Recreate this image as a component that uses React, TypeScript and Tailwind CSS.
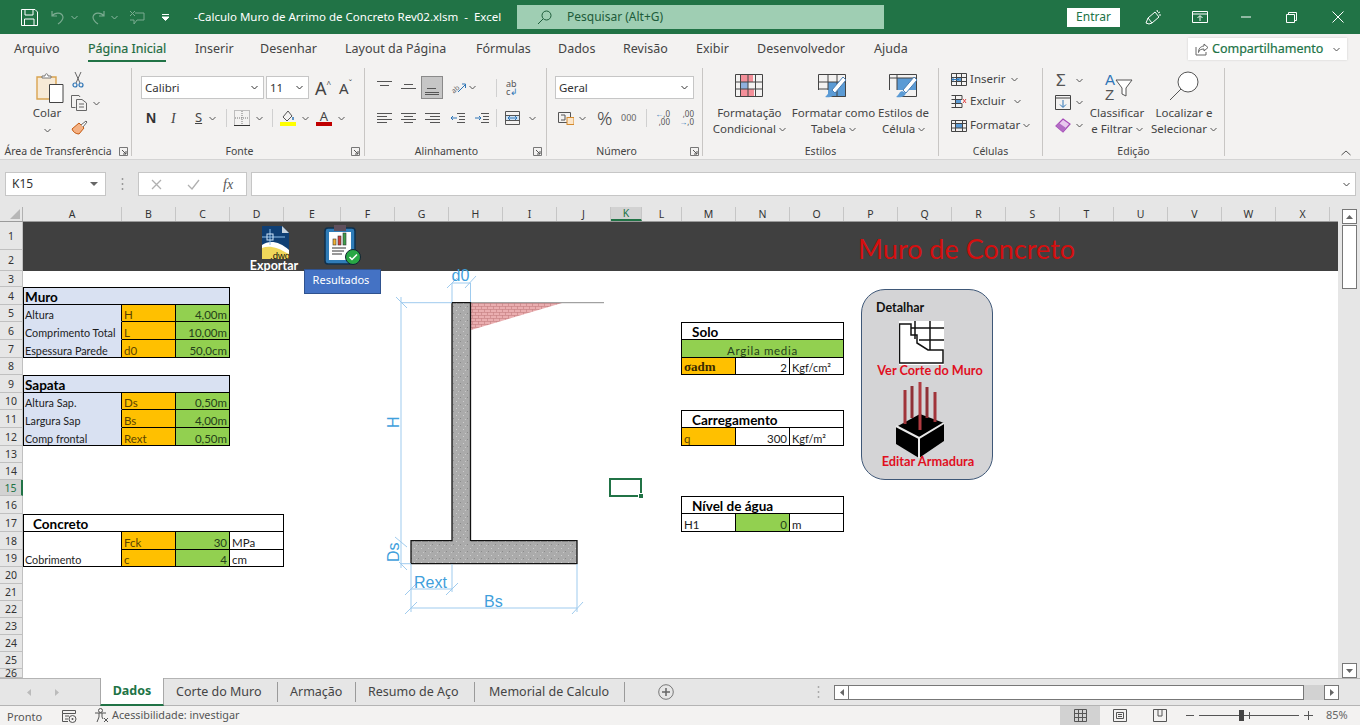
import React from "react";

type IcP = { w: number; h: number; className?: string; children?: React.ReactNode };
function Ic({ w, h, className, children }: IcP) {
  return (
    <svg width={w} height={h} viewBox={`0 0 ${w} ${h}`} fill="none" className={`shrink-0 ${className ?? ""}`}>
      {children}
    </svg>
  );
}
function Ch({ className, c = "#555" }: { className?: string; c?: string }) {
  return (
    <Ic w={7} h={5} className={className}>
      <path d="M.5 1 3.5 4 6.5 1" stroke={c} strokeWidth="1" />
    </Ic>
  );
}
function Lines({ w = 16, h = 14, l, className }: { w?: number; h?: number; l: number[][]; className?: string }) {
  return (
    <Ic w={w} h={h} className={className}>
      {l.map(([a, b, y], i) => (
        <path key={i} d={`M${a} ${y + 0.5}H${b}`} stroke="#555" />
      ))}
    </Ic>
  );
}
function Launcher() {
  return (
    <Ic w={9} h={9}>
      <path d="M.5 8.5V.5H8.5V8.5H.5" stroke="#777" />
      <path d="M3 3 7 7M7 4V7H4" stroke="#555" />
    </Ic>
  );
}
function Group({ className, label, launch, children }: { className: string; label: string; launch?: string; children: React.ReactNode }) {
  return (
    <div className={`flex h-[88px] mt-[2px] flex-col border-r border-[#c8c6c4] ${className}`}>
      <div className="h-[79px] shrink-0">{children}</div>
      <div className="flex h-[9px] items-center">
        <span className="flex-1 text-center text-[10.5px] leading-[11px] text-[#444] whitespace-nowrap">{label}</span>
        {launch && <span className={`flex ${launch} justify-center`}><Launcher /></span>}
      </div>
    </div>
  );
}
function Select({ className, text }: { className: string; text: string }) {
  return (
    <div className={`flex h-[23px] items-center justify-between border border-[#c6c6c6] bg-white pl-[3px] pr-[5px] ${className}`}>
      <span className="text-[11.5px] text-[#333]">{text}</span>
      <Ch c="#333" />
    </div>
  );
}
function BigBtn({ className, icon, a, b }: { className: string; icon: React.ReactNode; a: string; b: string }) {
  return (
    <div className={`flex flex-col items-center ${className}`}>
      <div className="h-[38px] pt-[6px]">{icon}</div>
      <span className="text-[11.5px] leading-[16px] text-[#444] whitespace-nowrap mt-[-1px]">{a}</span>
      <span className="flex items-center gap-[3px] text-[11.5px] leading-[16px] text-[#444] whitespace-nowrap">
        {b}
        <Ch />
      </span>
    </div>
  );
}

const Brush = () => (
  <g>
    <path d="M25 3 14 16l3 3L28 6z" fill="#fff" stroke="#4a7fb5" />
    <path d="M13 17c-3 1-3 4-6 6 4 1 9 0 10-4z" fill="#5b9bd5" />
  </g>
);

function TitleBar() {
  return (
    <div className="flex h-[34px] shrink-0 items-center bg-[#217346] text-white">
      <Ic w={17} h={17} className="ml-[21px]">
        <path d="M.5.5H14L16.5 3V16.5H.5Z M4 .5V6H12V.5 M3.5 16.5V10H13V16.5" stroke="#fff" />
      </Ic>
      <Ic w={15} h={15} className="ml-[12px] opacity-40">
        <path d="M2 1V6H7M2 6C5 2 12 2 13 7 13 10 11 12 8 14" stroke="#fff" strokeWidth="1.2" />
      </Ic>
      <Ch c="#8fb9a3" className="ml-[6px]" />
      <Ic w={15} h={15} className="ml-[13px] opacity-40">
        <path d="M13 1V6H8M13 6C10 2 3 2 2 7 2 10 4 12 7 14" stroke="#fff" strokeWidth="1.2" />
      </Ic>
      <Ch c="#8fb9a3" className="ml-[5px]" />
      <Ic w={16} h={15} className="ml-[11px] opacity-40">
        <path d="M6 3H15V10H8L5 14V10H1M1 1 6 6M6 1 1 6" stroke="#fff" />
      </Ic>
      <Ic w={7} h={7} className="ml-[17px]">
        <path d="M0 .5H7M0 3 3.5 6.5 7 3Z" stroke="#fff" fill="#fff" />
      </Ic>
      <span className="ml-[25px] w-[323px] overflow-hidden text-[11.5px] whitespace-nowrap">-Calculo Muro de Arrimo de Concreto Rev02.xlsm&nbsp; - &nbsp;Excel</span>
      <div className="flex h-[24px] w-[367px] items-center bg-[#9fceb3] text-[#1d5c3a]">
        <Ic w={15} h={15} className="ml-[20px]">
          <circle cx="9.5" cy="5.5" r="4.5" stroke="#1d5c3a" />
          <path d="M6 9 1 14" stroke="#1d5c3a" />
        </Ic>
        <span className="ml-[15px] text-[12px] whitespace-nowrap">Pesquisar (Alt+G)</span>
      </div>
      <div className="ml-[183px] flex h-[19px] w-[53px] items-center justify-center bg-white text-[12px] text-[#217346]">Entrar</div>
      <Ic w={17} h={17} className="ml-[25px]">
        <path d="M1 14 3 9 10 3 14 8 7 14 4 15ZM3 9l4 5M12 1l.5 2M15 3l-2 1M16 6h-2" stroke="#fff" />
      </Ic>
      <Ic w={16} h={12} className="ml-[30px]">
        <path d="M.5.5H15.5V11.5H.5ZM.5 3H15.5M8 10V5M5.5 7 8 4.5 10.5 7" stroke="#fff" />
      </Ic>
      <Ic w={10} h={2} className="ml-[33px]">
        <path d="M0 1H10" stroke="#fff" />
      </Ic>
      <Ic w={11} h={11} className="ml-[35px]">
        <path d="M.5 2.5H8.5V10.5H.5ZM2.5 2.5V.5H10.5V8.5H8.5" stroke="#fff" />
      </Ic>
      <Ic w={12} h={12} className="ml-[35px]">
        <path d="M.5.5 11.5 11.5M11.5.5.5 11.5" stroke="#fff" />
      </Ic>
    </div>
  );
}

const tabs: [string, string][] = [
  ["Arquivo", "w-[74px]"],
  ["Página Inicial", "w-[107px]"],
  ["Inserir", "w-[65px]"],
  ["Desenhar", "w-[85px]"],
  ["Layout da Página", "w-[131px]"],
  ["Fórmulas", "w-[82px]"],
  ["Dados", "w-[65px]"],
  ["Revisão", "w-[73px]"],
  ["Exibir", "w-[61px]"],
  ["Desenvolvedor", "w-[117px]"],
  ["Ajuda", "w-[60px]"],
];

function TabRow() {
  return (
    <div className="flex h-[32px] shrink-0 bg-[#f3f2f1] pl-[14px]">
      {tabs.map(([t, w]) => (
        <div key={t} className={`${w} flex`}>
          <span
            className={`h-[28px] pt-[6px] text-[12.5px] leading-[18px] whitespace-nowrap ${
              t === "Página Inicial" ? "border-b-[2px] border-[#217346] text-[#1f6b41] [-webkit-text-stroke:0.2px]" : "text-[#444]"
            }`}
          >
            {t}
          </span>
        </div>
      ))}
      <div className="ml-auto mr-[13px] mt-[4px] flex h-[22px] w-[159px] items-center bg-white pl-[7px] shadow-[0_0_2px_#ccc]">
        <Ic w={14} h={13}>
          <path d="M9 1l4 3.5L9 8V6C6 6 4 7 3.5 9.5 3.5 6 5 3.5 9 3ZM1 4V12H11V9" stroke="#666" />
        </Ic>
        <span className="ml-[3px] text-[12.5px] text-[#217346] whitespace-nowrap [-webkit-text-stroke:0.2px]">Compartilhamento</span>
        <Ch c="#555" className="ml-[10px]" />
      </div>
    </div>
  );
}

function Ribbon() {
  return (
    <div className="flex h-[94px] shrink-0 border-b border-[#d4d4d4] bg-[#f3f2f1]">
      <Group className="w-[132px]" label="Área de Transferência" launch="w-[15px]">
        <div className="flex">
          <div className="ml-[23px] flex w-[48px] flex-col items-center">
            <Ic w={28} h={30} className="ml-[6px] mt-[5px]">
              <path d="M1 4H20V26H1Z" fill="#f7ead6" stroke="#d9a450" strokeWidth="1.4" />
              <path d="M6 5V3H9C9 0 12 0 12 3H15V5Z" fill="#fff" stroke="#777" />
              <path d="M13.500 11.500H27V29.500H13.500Z" fill="#fff" stroke="#444" />
            </Ic>
            <span className="mt-[2px] text-[11.5px] leading-[16px] text-[#444]">Colar</span>
            <Ch className="mt-[7px]" />
          </div>
          <div className="flex flex-col">
            <Ic w={12} h={16} className="ml-[1px] mt-[4px]">
              <path d="M3 0 8 11M9 0 4 11" stroke="#666" />
              <circle cx="3" cy="13" r="2" stroke="#2e75b6" strokeWidth="1.2" />
              <circle cx="9" cy="13" r="2" stroke="#2e75b6" strokeWidth="1.2" />
            </Ic>
            <div className="mt-[7px] flex items-center">
              <Ic w={17} h={16}>
                <path d="M4.500 12.500H.5V.5H8L9 2M5.500 4.500H11L15.500 8V15.500H5.500ZM8 9H13M8 12H13" stroke="#666" />
              </Ic>
              <Ch className="ml-[5px]" />
            </div>
            <Ic w={17} h={15} className="mt-[9px]">
              <path d="M1 9 8 3 13 8 8 14C5 14 2 12 1 9Z" fill="#f4b183" stroke="#c55a11" />
              <path d="M10 5 15 1 16 2 12 7" fill="#fff" stroke="#666" />
            </Ic>
          </div>
        </div>
      </Group>

      <Group className="w-[233px]" label="Fonte" launch="w-[17px]">
        <div className="ml-[9px] mt-[8px] flex items-center">
          <Select className="w-[123px]" text="Calibri" />
          <Select className="ml-[2px] w-[43px]" text="11" />
          <span className="ml-[6px] text-[18px] leading-[20px] text-[#444]">A</span>
          <span className="mb-[8px] text-[8px] leading-[8px] text-[#444]">^</span>
          <span className="ml-[8px] text-[15px] leading-[20px] text-[#444]">A</span>
          <span className="mb-[8px] text-[8px] leading-[8px] text-[#444]">ˇ</span>
        </div>
        <div className="ml-[14px] mt-[7px] flex h-[24px] items-center">
          <span className="w-[24px] text-[14px] font-bold text-[#333] font-['Liberation_Sans',sans-serif]">N</span>
          <span className="w-[24px] pl-[1px] text-[14px] italic text-[#444] font-['Liberation_Serif',serif]">I</span>
          <span className="w-[14px] pl-[1px] text-[13px] text-[#444] underline">S</span>
          <Ch className="ml-[1px]" />
          <span className="ml-[10px] h-[18px] w-px bg-[#d0d0d0]" />
          <Ic w={16} h={16} className="ml-[7px]">
            <path d="M.5.5H15.500V15.500H.5Z" stroke="#888" strokeDasharray="1 1" />
            <path d="M8 1V15M1 8H15" stroke="#777" strokeDasharray="1 1" />
            <path d="M0 15.500H16" stroke="#333" />
          </Ic>
          <Ch className="ml-[6px]" />
          <span className="ml-[9px] h-[18px] w-px bg-[#d0d0d0]" />
          <Ic w={16} h={16} className="ml-[7px]">
            <path d="M3 7 8 1 12 6 7 11Z" stroke="#555" />
            <path d="M13 7V10" stroke="#2e75b6" strokeWidth="1.5" />
            <rect y="12" width="16" height="4" fill="#ffff00" />
          </Ic>
          <Ch className="ml-[6px]" />
          <div className="ml-[7px] flex w-[16px] flex-col items-center">
            <span className="text-[13px] leading-[12px] text-[#444]">A</span>
            <span className="h-[4px] w-[16px] bg-[#c00000]" />
          </div>
          <Ch className="ml-[6px]" />
        </div>
      </Group>

      <Group className="w-[182px]" label="Alinhamento" launch="w-[18px]">
        <div className="ml-[12px] mt-[8px] flex h-[23px] items-center">
          <Lines h={10} l={[[0, 15, 1], [3, 12, 5]]} className="mb-[5px]" />
          <Lines h={10} l={[[3, 12, 1], [0, 15, 5]]} className="ml-[8px]" />
          <div className="ml-[4px] flex h-[23px] w-[22px] items-center justify-center border border-[#8a8a8a] bg-[#c6c6c6]">
            <Lines w={14} h={10} l={[[2, 11, 3], [0, 14, 7], [0, 14, 9]]} className="mt-[4px]" />
          </div>
          <Ic w={16} h={14} className="ml-[7px] overflow-visible">
            <text x="1" y="11" fontSize="7" fill="#666" transform="rotate(-40 5 8)">ab</text>
            <path d="M8 11 15 4M12 3H15.500V7" stroke="#2e75b6" />
          </Ic>
          <Ch className="ml-[3px]" />
          <span className="ml-[20px] h-[18px] w-px bg-[#d0d0d0]" />
          <div className="ml-[9px] flex w-[16px] flex-col">
            <span className="h-[8px] text-[9px] leading-[8px] text-[#555]">ab</span>
            <span className="h-[8px] text-[9px] leading-[8px] text-[#555]">c<span className="text-[#2e75b6]">↲</span></span>
          </div>
        </div>
        <div className="ml-[12px] mt-[7px] flex h-[24px] items-center">
          <Lines h={12} l={[[0, 15, 1], [0, 10, 4], [0, 15, 7], [0, 10, 10]]} />
          <Lines h={12} l={[[0, 15, 1], [3, 12, 4], [0, 15, 7], [3, 12, 10]]} className="ml-[8px]" />
          <Lines h={12} l={[[0, 15, 1], [5, 15, 4], [0, 15, 7], [5, 15, 10]]} className="ml-[8px]" />
          <Ic w={16} h={12} className="ml-[9px]">
            <path d="M7 1.500H15M9 4.500H15M9 7.500H15M7 10.500H15" stroke="#555" />
            <path d="M1 6H7M3 4 1 6 3 8" stroke="#2e75b6" />
          </Ic>
          <Ic w={16} h={12} className="ml-[8px]">
            <path d="M7 1.500H15M9 4.500H15M9 7.500H15M7 10.500H15" stroke="#555" />
            <path d="M1 6H7M5 4 7 6 5 8" stroke="#2e75b6" />
          </Ic>
          <span className="ml-[6px] h-[18px] w-px bg-[#d0d0d0]" />
          <Ic w={15} h={14} className="ml-[8px]">
            <path d="M.5.5H14.500V13.500H.5ZM.5 4.500H14.500M.5 9.500H14.500" stroke="#555" />
            <rect x="1" y="5" width="13" height="4" fill="#cfe3f5" />
            <path d="M3 7H12M5 5 3 7 5 9M10 5 12 7 10 9" stroke="#2e75b6" />
          </Ic>
          <Ch className="ml-[9px]" />
        </div>
      </Group>

      <Group className="w-[156px]" label="Número" launch="w-[16px]">
        <Select className="ml-[8px] mt-[8px] w-[139px]" text="Geral" />
        <div className="ml-[11px] mt-[7px] flex h-[24px] items-center">
          <Ic w={16} h={14}>
            <path d="M.5 1.500H12.500V11.500H.5Z" stroke="#555" />
            <rect x="9" y="6.500" width="7" height="7" fill="#fbe5c8" stroke="#d48a2e" />
            <path d="M3 4H7V9H3" stroke="#555" />
          </Ic>
          <Ch className="ml-[5px]" />
          <span className="ml-[11px] w-[17px] text-[19px] font-light leading-[20px] text-[#444]">%</span>
          <span className="ml-[7px] w-[17px] text-[9px] text-[#666]">000</span>
          <span className="ml-[8px] h-[18px] w-px bg-[#d0d0d0]" />
          <div className="ml-[6px] flex w-[17px] flex-col text-[8px] leading-[8px] text-[#555]">
            <span className="h-[8px] text-right"><span className="text-[#2e75b6]">←</span>,0</span>
            <span className="h-[8px] text-right">,00</span>
          </div>
          <div className="ml-[7px] flex w-[17px] flex-col text-[8px] leading-[8px] text-[#555]">
            <span className="h-[8px] text-right">,00</span>
            <span className="h-[8px] text-right"><span className="text-[#2e75b6]">→</span>,0</span>
          </div>
        </div>
      </Group>

      <Group className="w-[236px]" label="Estilos">
        <div className="flex">
          <BigBtn
            className="ml-[9px] w-[76px]"
            a="Formatação"
            b="Condicional"
            icon={
              <Ic w={28} h={23}>
                <rect x="5" y="1" width="13" height="7" fill="#f4909a" />
                <rect x="5" y="8" width="8" height="7" fill="#8fb0dc" />
                <rect x="5" y="15" width="14" height="7" fill="#f4909a" />
                <path d="M.5.5H27.500V22.500H.5ZM.5 8H27.500M.5 15H27.500M5.500.5V22.500M13 .5V22.500M20.500.5V22.500" stroke="#444" />
              </Ic>
            }
          />
          <BigBtn
            className="ml-[5px] w-[84px]"
            a="Formatar como"
            b="Tabela"
            icon={
              <Ic w={30} h={26}>
                <rect x="10" y="8" width="18" height="15" fill="#5b9bd5" />
                <path d="M.5.5H27.500V22.500H10M.5.5V16M.5 8H27.500M.5 15H10M10 .5V16M19 .5V22" stroke="#444" />
                <Brush />
              </Ic>
            }
          />
          <BigBtn
            className="ml-[-6px] w-[70px]"
            a="Estilos de"
            b="Célula"
            icon={
              <Ic w={30} h={26}>
                <rect x="8" y="4" width="20" height="12" fill="#5b9bd5" />
                <path d="M.5.5H27.500V22.500H10M.5.5V16M.5 4H27.500M8 .5V16" stroke="#444" />
                <Brush />
              </Ic>
            }
          />
        </div>
      </Group>

      <Group className="w-[104px]" label="Células">
        <div className="ml-[12px] flex flex-col text-[11.5px] text-[#444]">
          <div className="mt-[2px] flex h-[18px] items-center">
            <Ic w={16} h={13}>
              <rect x="5" y="4" width="6" height="4" fill="#5b9bd5" />
              <path d="M.5.5H15.500V12.500H.5ZM.5 4.500H15.500M.5 8.500H15.500M5.500.5V12.500M10.500.5V12.500" stroke="#444" />
              <path d="M1 6.500H8M3 4.500 1 6.500 3 8.500" stroke="#2e75b6" />
            </Ic>
            <span className="ml-[3px] w-[41px]">Inserir</span>
            <Ch />
          </div>
          <div className="mt-[4px] flex h-[18px] items-center">
            <Ic w={16} h={13}>
              <rect x="4" y="4" width="6" height="5" fill="#5b9bd5" />
              <path d="M.5.5H11V4.500H.5M.5 8.500H11V12.500H.5M4.500.5V12.500" stroke="#444" />
              <path d="M12 4 15 8M15 4 12 8" stroke="#e04040" />
            </Ic>
            <span className="ml-[3px] w-[44px]">Excluir</span>
            <Ch />
          </div>
          <div className="mt-[6px] flex h-[18px] items-center">
            <Ic w={16} h={14}>
              <rect x="4" y="5" width="8" height="5" fill="#5b9bd5" />
              <path d="M.5 2.500H15.500V13.500H.5ZM.5 5.500H15.500M.5 10H15.500M4.500 2.500V13.500M11.500 2.500V13.500" stroke="#444" />
            </Ic>
            <span className="ml-[3px]">Formatar</span>
            <Ch className="ml-[3px]" />
          </div>
        </div>
      </Group>

      <Group className="w-[182px]" label="Edição">
        <div className="flex">
          <div className="ml-[12px] flex w-[33px] flex-col">
            <div className="mt-[3px] flex h-[18px] items-center">
              <span className="ml-[1px] w-[17px] text-[17px] leading-[16px] text-[#555]">Σ</span>
              <Ch className="ml-[3px]" />
            </div>
            <div className="mt-[5px] flex h-[16px] items-center">
              <Ic w={16} h={15}>
                <path d="M.5.5H15.500V14.500H.5ZM.5 3H15.500" stroke="#444" />
                <path d="M8 5V12M5 9.500 8 12.500 11 9.500" stroke="#2e75b6" />
              </Ic>
              <Ch className="ml-[5px]" />
            </div>
            <div className="mt-[7px] flex h-[16px] items-center">
              <Ic w={16} h={15}>
                <path d="M8 1 15 6 8 14 1 8Z" fill="#e8c9ee" stroke="#a64ab8" strokeWidth="1.2" />
                <path d="M4 5 11 10 8 14 1 8Z" fill="#b26cc4" />
              </Ic>
              <Ch className="ml-[5px]" />
            </div>
          </div>
          <div className="ml-[-1px] flex w-[60px] flex-col items-center">
            <div className="ml-[4px] h-[38px] pt-[4px]">
              <Ic w={30} h={30}>
                <text x="1" y="13" fontSize="15" fill="#2e75b6" fontFamily="Liberation Sans">A</text>
                <text x="1" y="28" fontSize="15" fill="#555" fontFamily="Liberation Sans">Z</text>
                <path d="M12 8H28L22 16V24L18 22V16Z" stroke="#555" fill="#fff" />
              </Ic>
            </div>
            <span className="text-[11.5px] leading-[16px] text-[#444] whitespace-nowrap -mt-[1px]">Classificar</span>
            <span className="flex items-center gap-[3px] text-[11.5px] leading-[16px] text-[#444] whitespace-nowrap">e Filtrar<Ch /></span>
          </div>
          <div className="ml-[3px] flex w-[68px] flex-col items-center">
            <div className="h-[38px] pt-[3px]">
              <Ic w={30} h={30}>
                <circle cx="19" cy="11" r="10" stroke="#555" fill="#fff" />
                <path d="M12 18 1 29" stroke="#555" />
              </Ic>
            </div>
            <span className="text-[11.5px] leading-[16px] text-[#444] whitespace-nowrap -mt-[1px]">Localizar e</span>
            <span className="flex items-center gap-[3px] text-[11.5px] leading-[16px] text-[#444] whitespace-nowrap">Selecionar<Ch /></span>
          </div>
        </div>
      </Group>

      <div className="ml-auto mr-[9px] mt-[84px]">
        <Ic w={10} h={6}>
          <path d="M.5 5 5 1 9.500 5" stroke="#555" />
        </Ic>
      </div>
    </div>
  );
}

function FormulaBar() {
  return (
    <div className="flex h-[47px] shrink-0 items-start bg-[#e6e6e6] pt-[12px]">
      <div className="ml-[5px] flex h-[24px] w-[101px] items-center justify-between border border-[#c6c6c6] bg-white pl-[6px] pr-[7px]">
        <span className="text-[12px] text-[#333]">K15</span>
        <Ic w={8} h={4}><path d="M0 0H8L4 4Z" fill="#666" /></Ic>
      </div>
      <Ic w={3} h={14} className="ml-[15px] mt-[5px]">
        <path d="M1.500 1V3M1.500 6V8M1.500 11V13" stroke="#999" strokeWidth="1.500" />
      </Ic>
      <div className="ml-[14px] flex h-[24px] w-[109px] items-center border border-[#c6c6c6] bg-white">
        <Ic w={11} h={11} className="ml-[12px]"><path d="M1 1 10 10M10 1 1 10" stroke="#b0b0b0" strokeWidth="1.300" /></Ic>
        <Ic w={13} h={11} className="ml-[25px]"><path d="M1 6 5 10 12 1" stroke="#b0b0b0" strokeWidth="1.300" /></Ic>
        <span className="ml-[23px] text-[14px] italic text-[#555] font-['Liberation_Serif',serif]">fx</span>
      </div>
      <div className="ml-[4px] flex h-[24px] w-[1105px] items-center justify-end border border-[#c6c6c6] bg-white pr-[5px]">
        <Ch c="#444" />
      </div>
    </div>
  );
}

const cols: [string, string][] = [
  ["A", "w-[99px]"], ["B", "w-[54px]"], ["C", "w-[54px]"], ["D", "w-[54px]"], ["E", "w-[57px]"], ["F", "w-[54px]"],
  ["G", "w-[54px]"], ["H", "w-[54px]"], ["I", "w-[54px]"], ["J", "w-[54px]"], ["K", "w-[31px]"], ["L", "w-[40px]"],
  ["M", "w-[54px]"], ["N", "w-[54px]"], ["O", "w-[54px]"], ["P", "w-[54px]"], ["Q", "w-[54px]"], ["R", "w-[54px]"],
  ["S", "w-[54px]"], ["T", "w-[54px]"], ["U", "w-[54px]"], ["V", "w-[54px]"], ["W", "w-[54px]"], ["X", "w-[54px]"],
];
const rowH = [
  "h-[28px]", "h-[21px]", "h-[16px]", "h-[18px]", "h-[17px]", "h-[18px]", "h-[18px]", "h-[17px]", "h-[18px]", "h-[17px]",
  "h-[18px]", "h-[18px]", "h-[17px]", "h-[17px]", "h-[16px]", "h-[18px]", "h-[18px]", "h-[18px]", "h-[17px]", "h-[17px]",
  "h-[17px]", "h-[17px]", "h-[17px]", "h-[17px]", "h-[17px]", "h-[9px]",
];

const cal = "font-['Lato',sans-serif]";
const ln = "border-r border-b border-black";
const small = "text-[10.8px] leading-[12px]";
const big = "text-[13.5px] leading-[14px] font-bold text-black";

function Cell({ className, size = "text-[11.5px] leading-[13px]", children }: { className?: string; size?: string; children?: React.ReactNode }) {
  return (
    <div className={`flex items-end overflow-hidden whitespace-nowrap px-[2px] ${size} ${cal} ${className ?? "text-[#1c1c1c]"}`}>
      {children}
    </div>
  );
}
const Head = ({ className, children }: { className?: string; children: React.ReactNode }) => (
  <Cell size={big} className={className ?? ""}>{children}</Cell>
);
const O = ({ children }: { children: React.ReactNode }) => <Cell className={`bg-[#ffc000] text-[#5c4300] ${ln}`}>{children}</Cell>;
const G = ({ children }: { children: React.ReactNode }) => <Cell className={`justify-end bg-[#92d050] text-[#24401a] ${ln}`}>{children}</Cell>;
const Txt = ({ children, className }: { children: React.ReactNode; className?: string }) => (
  <Cell className={`text-[#1c1c1c] ${className ?? ""}`}>{children}</Cell>
);

function ParamTable({ pos, title, rows }: { pos: string; title: string; rows: [string, string, string][] }) {
  return (
    <div className={`grid grid-cols-subgrid grid-rows-subgrid border-t border-l border-black ${pos}`}>
      <Head className={`col-span-3 bg-[#d9e1f2] pl-[1px] ${ln}`}>{title}</Head>
      {rows.map(([a, b, c], i) => (
        <React.Fragment key={a}>
          <Cell
            size={small}
            className={`bg-[#d9e1f2] pl-[1px] text-[#1c1c1c] border-r border-b border-r-black ${
              i === rows.length - 1 ? "border-b-black" : "border-b-[#d9e1f2]"
            }`}
          >
            {a}
          </Cell>
          <O>{b}</O>
          <G>{c}</G>
        </React.Fragment>
      ))}
    </div>
  );
}

function Sheet() {
  return (
    <div className="relative grid h-[456px] w-[1315px] grid-cols-[99px_54px_54px_54px_57px_54px_54px_54px_54px_54px_31px_40px_54px_54px_54px_54px_54px_54px_54px_54px_54px_54px_54px_54px_8px] grid-rows-[28px_21px_16px_18px_17px_18px_18px_17px_18px_17px_18px_18px_17px_17px_16px_18px_18px_18px_17px_17px_17px_17px_17px_17px_17px_9px] overflow-hidden bg-white">
      <div className={`col-[1/-1] row-[1/3] flex items-center bg-[#404040] pl-[835px] pt-[4px] text-[27px] leading-[32px] text-[#d40f0f] whitespace-nowrap ${cal}`}>
        Muro de Concreto
      </div>

      <ParamTable
        pos="col-[1/4] row-[4/8]"
        title="Muro"
        rows={[["Altura", "H", "4,00m"], ["Comprimento Total", "L", "10,00m"], ["Espessura Parede", "d0", "50,0cm"]]}
      />
      <ParamTable
        pos="col-[1/4] row-[9/13]"
        title="Sapata"
        rows={[["Altura Sap.", "Ds", "0,50m"], ["Largura Sap", "Bs", "4,00m"], ["Comp frontal", "Rext", "0,50m"]]}
      />

      <div className="col-[1/5] row-[17/20] grid grid-cols-subgrid grid-rows-subgrid border-t border-l border-black">
        <Head className={`col-span-4 pl-[9px] ${ln}`}>Concreto</Head>
        <Cell className="border-r border-black" />
        <O>Fck</O>
        <G>30</G>
        <Txt className={ln}>MPa</Txt>
        <Cell size={small} className={`pl-[1px] text-[#1c1c1c] ${ln}`}>Cobrimento</Cell>
        <O>c</O>
        <G>4</G>
        <Txt className={ln}>cm</Txt>
      </div>

      <div className="col-[13/16] row-[6/9] -ml-px grid grid-cols-subgrid grid-rows-subgrid border-t border-l border-black">
        <Head className={`col-span-3 pl-[10px] ${ln}`}>Solo</Head>
        <Cell size="text-[11.5px] leading-[13px] tracking-[0.7px]" className={`col-span-3 justify-center bg-[#92d050] text-[#24401a] ${ln}`}>Argila media</Cell>
        <Cell size="text-[13px] leading-[14px] font-bold" className={`bg-[#ffc000] font-['Liberation_Serif',serif] text-[#3a2a00] ${ln}`}>σadm</Cell>
        <Txt className={`justify-end ${ln}`}>2</Txt>
        <Cell size="text-[11px] leading-[13px]" className={`text-[#1c1c1c] ${ln}`}>Kgf/cm²</Cell>
      </div>
      <div className="col-[13/16] row-[11/13] -ml-px grid grid-cols-subgrid grid-rows-subgrid border-t border-l border-black">
        <Head className={`col-span-3 pl-[10px] ${ln}`}>Carregamento</Head>
        <O>q</O>
        <Txt className={`justify-end ${ln}`}>300</Txt>
        <Cell size="text-[11px] leading-[13px]" className={`text-[#1c1c1c] ${ln}`}>Kgf/m²</Cell>
      </div>
      <div className="col-[13/16] row-[16/18] -ml-px grid grid-cols-subgrid grid-rows-subgrid border-t border-l border-black">
        <Head className={`col-span-3 pl-[10px] ${ln}`}>Nível de água</Head>
        <Txt className={ln}>H1</Txt>
        <G>0</G>
        <Txt className={ln}>m</Txt>
      </div>

      <div className="relative col-[11] row-[15]">
        <div className="absolute -left-[2px] -top-[2px] right-0 -bottom-[1px] border-2 border-[#217346]" />
        <div className="absolute -bottom-[3px] -right-[2px] h-[6px] w-[6px] border border-white bg-[#217346]" />
      </div>

      {/* Floating sheet objects */}
      <div className="absolute left-[226px] top-[4px] flex w-[50px] flex-col items-center">
        <Ic w={28} h={33} className="mr-[-1px]">
          <path d="M1 0H21L28 7V33H1Z" fill="#0f3f74" />
          <path d="M21 0 28 7H21Z" fill="#c7d3de" />
          <path d="M1 21C8 17 18 19 28 26V33H1Z" fill="#f0d75a" />
          <path d="M1 19C8 14 18 15 28 24V28C16 21 8 19 1 22Z" fill="#fff" />
          <path d="M9 3V19M1 11H24" stroke="#8fc0ea" />
          <rect x="6" y="8" width="6" height="6" stroke="#cfe6fa" />
          <text x="9" y="32.500" fontSize="9.500" fill="#111" fontFamily="Liberation Sans">.dwg</text>
        </Ic>
        <span className={`text-[12.5px] font-bold leading-[13px] text-white whitespace-nowrap ${cal}`}>Exportar</span>
      </div>

      <div className="absolute left-[301px] top-[2px]">
        <Ic w={38} h={42}>
          <rect x="1" y="4" width="30" height="36" rx="3" fill="#2f7cb8" stroke="#10304c" strokeWidth="1.500" />
          <rect x="5" y="8" width="22" height="28" fill="#fff" />
          <path d="M10 1H22V7H10Z" fill="#5f4f5c" />
          <rect x="9" y="15" width="3" height="6" fill="#f2b233" stroke="#333" strokeWidth=".6" />
          <rect x="14" y="12" width="3" height="9" fill="#d2403a" stroke="#333" strokeWidth=".6" />
          <rect x="19" y="9" width="3" height="12" fill="#3f9e4a" stroke="#333" strokeWidth=".6" />
          <path d="M8 24H22M8 27H20M8 30H18" stroke="#333" />
          <circle cx="29" cy="33" r="7.500" fill="#28a745" stroke="#123" />
          <path d="M25.500 33 28 35.500 33 30.500" stroke="#fff" strokeWidth="1.500" />
        </Ic>
      </div>
      <div className="absolute left-[281px] top-[47px] flex h-[25px] w-[77px] items-center justify-center border border-[#2f528f] bg-[#4472c4] pb-[3px] pr-[3px] text-[11px] text-white">
        Resultados
      </div>

      <svg className="absolute left-[357px] top-[43px]" width="260" height="360" viewBox="380 265 260 360" fill="none">
        <defs>
          <pattern id="conc" width="7" height="7" patternUnits="userSpaceOnUse">
            <rect width="7" height="7" fill="#ababab" />
            <rect x="1" y="2" width="1" height="1" fill="#d0d0d0" />
            <rect x="5" y="5" width="1" height="1" fill="#8a8a8a" />
            <rect x="3" y="6" width="1" height="1" fill="#c8c8c8" />
          </pattern>
          <pattern id="brick" width="6" height="6" patternUnits="userSpaceOnUse">
            <rect width="6" height="6" fill="#eaaeb0" />
            <path d="M0 .5H6M0 3.500H6M1.500 0V3M4.500 3V6" stroke="#c98486" strokeWidth=".7" />
          </pattern>
        </defs>
        <path d="M471 303H562L471 330Z" fill="url(#brick)" />
        <path d="M470 302.700H604" stroke="#8c8c8c" />
        <path d="M452 302.700H470.500V540.700H577V563.700H411V540.700H452Z" fill="url(#conc)" stroke="#111" strokeWidth="1.300" />
        <g stroke="#9fcbee">
          <path d="M401 297V568M401 302.700H452M396 297 407 308M395 537 407 547M399 562 407 570M401 563.700H411" />
          <path d="M452 283H470.500M452 283V302M470.500 283V302M447 288 457 278M465 288 476 276" />
          <path d="M411 589H452M411 564V612M452 564V592M405 595 417 583M446 595 458 583" />
          <path d="M411 608H577M577 564V612M405 614 417 602M572 614 583 602" />
        </g>
        <g fill="#3fa0dc" fontFamily="Liberation Sans" fontSize="16">
          <text x="451.500" y="281">d0</text>
          <text x="414" y="588">Rext</text>
          <text x="484" y="607">Bs</text>
          <text x="0" y="0" transform="translate(399 428) rotate(-90)">H</text>
          <text x="0" y="0" transform="translate(399 562) rotate(-90)">Ds</text>
        </g>
      </svg>

      <div className={`absolute left-[838px] top-[67px] flex h-[191px] w-[132px] flex-col items-center rounded-[24px] border border-[#3f5878] bg-[#d4d4d6] ${cal}`}>
        <span className="ml-[14px] mt-[10px] self-start text-[12.5px] font-bold leading-[16px] text-[#111]">Detalhar</span>
        <Ic w={45} h={44} className="mr-[11px] mt-[5px]">
          <rect width="45" height="44" fill="#fff" />
          <path d="M.5 3H12V14H18V22L29 29H44V42H.5Z" stroke="#111" strokeWidth="1.500" />
          <path d="M16 0V18M31 0V29M12 7H45M20 19H45" stroke="#111" strokeWidth="1.500" />
        </Ic>
        <span className="ml-[6px] -mt-[2px] text-[12.7px] font-bold leading-[14px] text-[#e0101f] whitespace-nowrap">Ver Corte do Muro</span>
        <svg width="50" height="78" viewBox="897 378 50 78" fill="none" className="mr-[14px] mt-[3px]">
          <path d="M898 425 922 412 946 421V439L921 456 898 442Z" fill="#000" />
          <path d="M898 424 921 436 946 421M921 436V456" stroke="#e8e8e8" strokeWidth="2" />
          <g strokeWidth="3">
            <path d="M907 388V422" stroke="#a1343a" />
            <path d="M914 384V416" stroke="#8f3036" />
            <path d="M922 380V428" stroke="#b03a40" />
            <path d="M929 385V416" stroke="#8f3036" />
            <path d="M937 390V420" stroke="#a1343a" />
          </g>
        </svg>
        <span className="ml-[2px] -mt-[4px] text-[12.8px] font-bold leading-[14px] text-[#e0101f] whitespace-nowrap">Editar Armadura</span>
      </div>
    </div>
  );
}

function SheetArea() {
  return (
    <div className="flex shrink-0">
      <div className="flex w-[1338px] flex-col">
        <div className="flex h-[15px] bg-[#e6e6e6] border-b border-[#9a9a9a]">
          <div className="flex w-[23px] items-end justify-end border-r border-[#b1b1b1] pb-[2px] pr-[2px]">
            <Ic w={10} h={10}><path d="M10 0V10H0Z" fill="#b7b7b7" /></Ic>
          </div>
          {cols.map(([c, w]) => (
            <div
              key={c}
              className={`${w} flex items-center justify-center border-r border-[#c6c6c6] text-[10.5px] leading-[14px] ${
                c === "K" ? "border-b-2 border-b-[#217346] bg-[#d2d2d2] text-[#217346]" : "text-[#333]"
              }`}
            >
              {c}
            </div>
          ))}
        </div>
        <div className="flex h-[456px] overflow-hidden">
          <div className="flex w-[23px] shrink-0 flex-col bg-[#e6e6e6]">
            {rowH.map((h, i) => (
              <div
                key={i}
                className={`${h} flex shrink-0 items-center justify-center overflow-hidden border-b border-r border-[#c0c0c0] text-[10.5px] leading-[12px] ${
                  i === 14 ? "bg-[#d2d2d2] border-r-2 border-r-[#217346] text-[#217346]" : "text-[#333]"
                }`}
              >
                {i + 1}
              </div>
            ))}
          </div>
          <Sheet />
        </div>
      </div>
      <div className="flex w-[22px] flex-col items-center bg-[#e6e6e6] pt-[2px]">
        <div className="flex h-[15px] w-[15px] items-center justify-center border border-[#777] bg-white">
          <Ic w={7} h={4}><path d="M0 4H7L3.500 0Z" fill="#666" /></Ic>
        </div>
        <div className="mt-px h-[64px] w-[15px] border border-[#777] bg-white" />
        <div className="mt-auto flex h-[15px] w-[15px] items-center justify-center border border-[#777] bg-white">
          <Ic w={7} h={4}><path d="M0 0H7L3.500 4Z" fill="#666" /></Ic>
        </div>
      </div>
    </div>
  );
}

function SheetTabs() {
  const Sep = ({ className }: { className: string }) => <span className={`h-[20px] w-px bg-[#9a9a9a] ${className}`} />;
  const T = ({ className, children }: { className: string; children: React.ReactNode }) => (
    <span className={`text-[12.5px] text-[#444] whitespace-nowrap ${className}`}>{children}</span>
  );
  return (
    <div className="flex h-[28px] shrink-0 items-center border-t border-b border-[#b4b4b4] bg-[#e6e6e6]">
      <Ic w={4} h={7} className="ml-[27px]"><path d="M4 0V7L0 3.500Z" fill="#bbb" /></Ic>
      <Ic w={4} h={7} className="ml-[24px]"><path d="M0 0V7L4 3.500Z" fill="#bbb" /></Ic>
      <div className="ml-[41px] -my-px flex h-[28px] w-[64px] items-center justify-center border-x border-b-[2px] border-x-[#a8a8a8] border-b-[#217346] bg-white text-[12.5px] font-bold text-[#217346]">
        Dados
      </div>
      <T className="ml-[12px] w-[88px]">Corte do Muro</T>
      <Sep className="ml-[13px]" />
      <T className="ml-[12px] w-[52px]">Armação</T>
      <Sep className="ml-[13px]" />
      <T className="ml-[12px] w-[91px]">Resumo de Aço</T>
      <Sep className="ml-[15px]" />
      <T className="ml-[14px] w-[121px]">Memorial de Calculo</T>
      <Sep className="ml-[14px]" />
      <Ic w={16} h={16} className="ml-[33px]">
        <circle cx="8" cy="8" r="7.300" stroke="#777" />
        <path d="M8 4V12M4 8H12" stroke="#666" strokeWidth="1.500" />
      </Ic>
      <Ic w={3} h={14} className="ml-[143px]">
        <path d="M1.500 1V3M1.500 6V8M1.500 11V13" stroke="#aaa" strokeWidth="1.500" />
      </Ic>
      <div className="ml-[14px] flex h-[15px] w-[15px] items-center justify-center border border-[#777] bg-white">
        <Ic w={4} h={7}><path d="M4 0V7L0 3.500Z" fill="#666" /></Ic>
      </div>
      <div className="h-[15px] w-[455px] border-y border-r border-[#777] bg-white" />
      <div className="h-[15px] w-[20px] bg-[#d2d2d2]" />
      <div className="flex h-[15px] w-[15px] items-center justify-center border border-[#777] bg-white">
        <Ic w={4} h={7}><path d="M0 0V7L4 3.500Z" fill="#666" /></Ic>
      </div>
    </div>
  );
}

function StatusBar() {
  return (
    <div className="flex h-[19px] shrink-0 items-center bg-[#f3f2f1] text-[11px] text-[#555]">
      <span className="ml-[7px] w-[35px] pt-[3px]">Pronto</span>
      <Ic w={15} h={14} className="ml-[20px]">
        <path d="M.5 1.500H13.500V4.500H.5ZM.5 4.500V12.500H6M3 7H7M3 10H6" stroke="#555" />
        <circle cx="10.500" cy="10" r="3.500" stroke="#555" />
        <circle cx="10.500" cy="10" r="1" fill="#555" />
      </Ic>
      <Ic w={15} h={15} className="ml-[17px]">
        <circle cx="6.500" cy="2.500" r="2" stroke="#555" />
        <path d="M1 5H12M5 5V9L3 14M8 5V9L9 11M10 10 14 14M14 10 10 14" stroke="#555" />
      </Ic>
      <span className="ml-[3px] w-[129px] text-[10.8px] whitespace-nowrap">Acessibilidade: investigar</span>
      <div className="ml-[819px] flex h-[19px] w-[40px] items-center justify-center bg-[#d2d2d2]">
        <Ic w={13} h={13}>
          <path d="M.5.5H12.500V12.500H.5ZM.5 4.500H12.500M.5 8.500H12.500M4.500.5V12.500M8.500.5V12.500" stroke="#555" />
        </Ic>
      </div>
      <Ic w={14} h={13} className="ml-[13px]">
        <path d="M.5.5H13.500V12.500H.5ZM3.500 3.500H10.500V9.500H3.500ZM5 5.500H9M5 7.500H9" stroke="#555" />
      </Ic>
      <Ic w={14} h={13} className="ml-[26px]">
        <path d="M.5.5H13.500V12.500H.5ZM5 .5V7H9V.5" stroke="#555" />
      </Ic>
      <span className="ml-[19px] h-px w-[8px] bg-[#555]" />
      <div className="ml-[5px] flex w-[100px] items-center">
        <span className="h-px w-[40px] bg-[#555]" />
        <span className="h-[11px] w-[5px] bg-[#444]" />
        <span className="h-px w-[5px] bg-[#555]" />
        <span className="h-[7px] w-px bg-[#555]" />
        <span className="h-px flex-1 bg-[#555]" />
      </div>
      <Ic w={9} h={9} className="ml-[5px]"><path d="M4.500 0V9M0 4.500H9" stroke="#555" /></Ic>
      <span className="ml-[13px] text-[11px] text-[#666]">85%</span>
    </div>
  );
}

export default function App() {
  return (
    <div className="flex h-[725px] w-[1360px] flex-col overflow-hidden bg-[#f3f2f1] font-['Noto_Sans',sans-serif]">
      <TitleBar />
      <TabRow />
      <Ribbon />
      <FormulaBar />
      <SheetArea />
      <SheetTabs />
      <StatusBar />
    </div>
  );
}
